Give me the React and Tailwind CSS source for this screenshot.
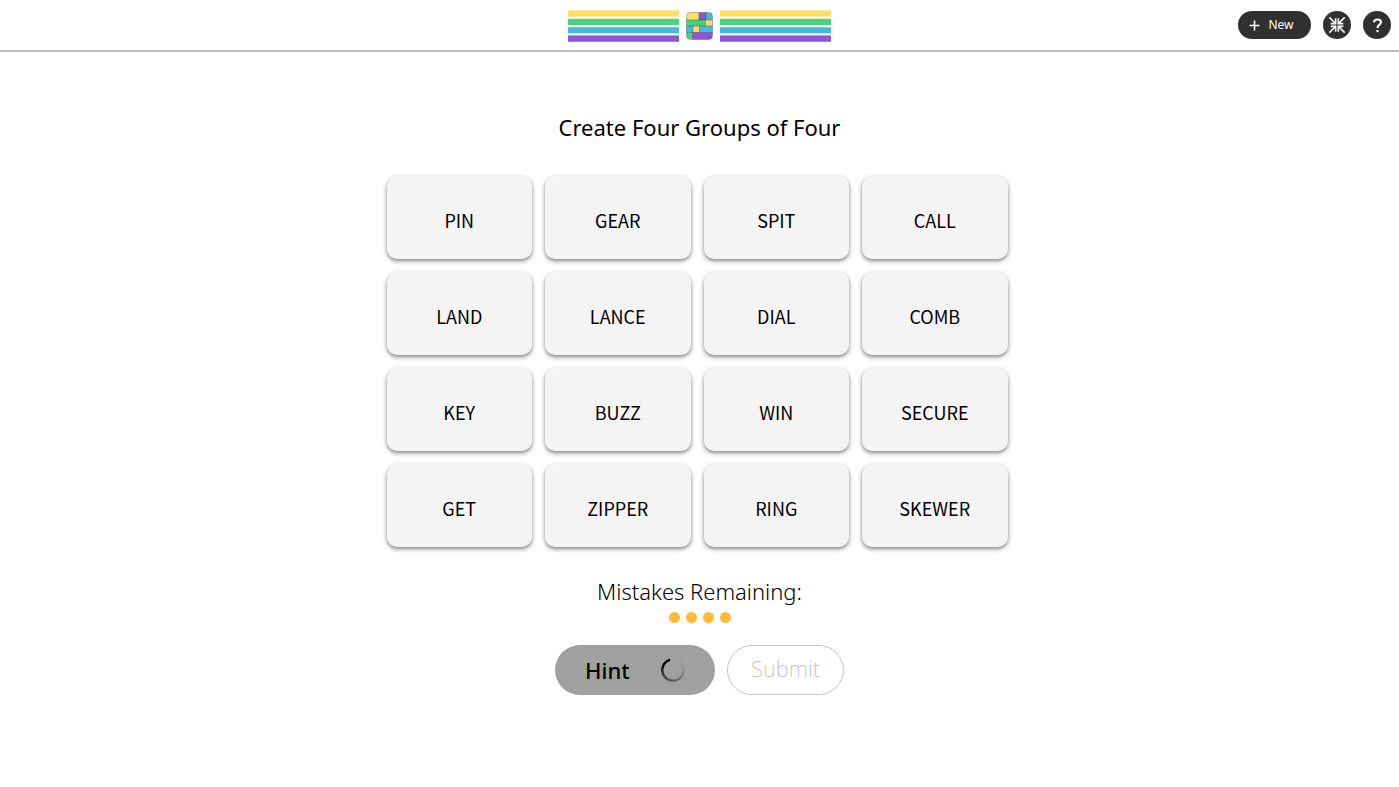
const rows = [
  ["PIN", "GEAR", "SPIT", "CALL"],
  ["LAND", "LANCE", "DIAL", "COMB"],
  ["KEY", "BUZZ", "WIN", "SECURE"],
  ["GET", "ZIPPER", "RING", "SKEWER"],
];

function Stripes() {
  return (
    <svg width="111" height="32" viewBox="0 0 111 32" aria-hidden="true">
      <rect y="0.4" width="111" height="6.2" fill="#ffdf62" />
      <rect y="8.8" width="111" height="6.2" fill="#48d47c" />
      <rect y="17.2" width="111" height="6.2" fill="#43bbdf" />
      <rect y="25.4" width="111" height="6.4" fill="#8f55db" />
    </svg>
  );
}

function Logo() {
  return (
    <svg width="27" height="28" viewBox="0 0 27 28" aria-hidden="true">
      <defs>
        <clipPath id="tile">
          <rect x="0.5" y="0.5" width="26" height="27" rx="4" />
        </clipPath>
      </defs>
      <g clipPath="url(#tile)">
        <rect width="13" height="8" fill="#ffdf62" />
        <rect x="13" width="7" height="8" fill="#8f55db" />
        <rect x="20" width="7" height="8" fill="#43bbdf" />
        <rect y="8" width="19.5" height="6" fill="#48d47c" />
        <rect x="19.5" y="8" width="7.5" height="6" fill="#ffdf62" />
        <rect y="14" width="7" height="6.5" fill="#43bbdf" />
        <rect x="7" y="14" width="6.5" height="6.5" fill="#ffdf62" />
        <rect x="13.5" y="14" width="13.5" height="6.5" fill="#43bbdf" />
        <rect y="20.5" width="6.5" height="8" fill="#48d47c" />
        <rect x="6.5" y="20.5" width="21" height="8" fill="#8f55db" />
        <path
          d="M0 8H27M0 14H27M0 20.5H27M13 0V8M20 0V8M19.5 8V14M7 14V20.5M13.5 14V20.5M6.5 20.5V28"
          stroke="#222"
          strokeOpacity="0.45"
          strokeWidth="0.8"
        />
      </g>
      <rect x="0.5" y="0.5" width="26" height="27" rx="4" fill="none" stroke="#555" strokeOpacity="0.5" strokeWidth="0.8" />
    </svg>
  );
}

function CompressIcon() {
  return (
    <svg width="18" height="18" viewBox="0 0 20 20" fill="none" stroke="#fff" strokeWidth="1.8" aria-hidden="true">
      <path d="M1.5 1.5L8 8M3 8.5H8.5V2.5" />
      <path d="M18.5 1.5L12 8M17 8.5H11.5V2.5" />
      <path d="M1.5 18.5L8 12M3 11.5H8.5V17.5" />
      <path d="M18.5 18.5L12 12M17 11.5H11.5V17.5" />
    </svg>
  );
}

function Spinner() {
  return (
    <span
      aria-hidden="true"
      className="size-6 rounded-full bg-[conic-gradient(from_0deg,#a0a0a0_0deg,#959595_80deg,#444_230deg,#000_300deg,#000_345deg,#a0a0a0_345deg)] [mask:radial-gradient(circle,transparent_9px,#000_10px)]"
    />
  );
}

export default function App() {
  return (
    <div className="min-h-screen bg-white font-['Noto_Sans',sans-serif] text-black">
      <header className="grid h-[52px] grid-cols-[1fr_auto_1fr] items-center border-b-2 border-[#bdbdbd] px-2">
        <div />
        <div className="flex items-center gap-[7px] pt-0.5">
          <Stripes />
          <Logo />
          <Stripes />
        </div>
        <div className="flex items-center justify-end gap-3">
          <button type="button" className="flex h-7 w-[73px] items-center justify-center gap-2 rounded-full bg-[#303030] pr-1.5 text-xs text-white">
            <svg width="11" height="11" viewBox="0 0 11 11" stroke="#fff" strokeWidth="1.6" aria-hidden="true">
              <path d="M5.5 0.5V10.5M0.5 5.5H10.5" />
            </svg>
            New
          </button>
          <button type="button" aria-label="Exit full screen" className="flex size-7 items-center justify-center rounded-full bg-[#303030]">
            <CompressIcon />
          </button>
          <button type="button" aria-label="Help" className="flex size-7 items-center justify-center rounded-full bg-[#303030]">
            <svg width="11" height="15" viewBox="0 0 12 16" fill="none" stroke="#fff" strokeWidth="2.3" aria-hidden="true">
              <path d="M2 4.6C2.2 2.6 3.8 1.5 6 1.5C8.3 1.5 9.8 2.7 9.8 4.5C9.8 7 6 7.2 6 10.6" />
              <path d="M6 12.8V15.2" />
            </svg>
          </button>
        </div>
      </header>

      <main className="flex flex-col items-center pt-[59px]">
        <h1 className="text-[22px] leading-8">Create Four Groups of Four</h1>

        <div className="mt-[33px] w-full max-w-[626px] pr-[5px]">
          <div className="grid grid-cols-4 gap-[13px]">
            {rows.flat().map((word) => (
              <button
                key={word}
                type="button"
                className="h-[83px] rounded-[10px] bg-[#f4f4f4] pt-1 font-['Noto_Sans_CJK_JP',sans-serif] text-lg shadow-[0_2px_4px_rgba(0,0,0,0.5)]"
              >
                {word}
              </button>
            ))}
          </div>
        </div>

        <p className="mt-7 text-[22px] leading-8 font-light">Mistakes Remaining:</p>
        <div className="mt-[5px] flex gap-1.5">
          {[0, 1, 2, 3].map((i) => (
            <span key={i} className="size-[11px] rounded-full bg-[#ffbb33]" />
          ))}
        </div>

        <div className="mt-[22px] flex gap-3">
          <button type="button" className="flex h-[50px] w-40 items-center justify-between rounded-full bg-[#a0a0a0] px-[30px] text-[22px] font-medium">
            Hint
            <Spinner />
          </button>
          <button type="button" disabled className="h-[50px] w-[117px] rounded-full border border-[#c4c4c4] pb-1 text-[22px] font-extralight text-[#bdbdbd]">
            Submit
          </button>
        </div>
      </main>
    </div>
  );
}
